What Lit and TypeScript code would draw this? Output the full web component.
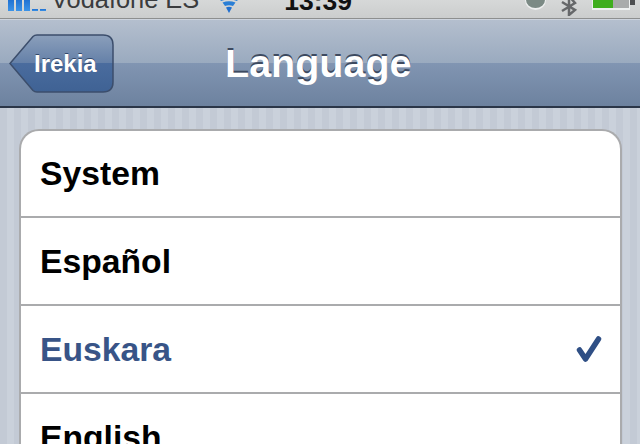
import { LitElement, css, html } from "lit";
import { customElement } from "lit/decorators.js";

const LANGUAGES = ["System", "Español", "Euskara", "English"];
const SELECTED = "Euskara";

@customElement("app-root")
export class AppRoot extends LitElement {
  static override styles = css`
    :host {
      display: block;
      width: 640px;
      height: 444px;
      overflow: hidden;
      font-family: "Liberation Sans", Arial, sans-serif;
      background: repeating-linear-gradient(
        90deg,
        #c3cad5 0,
        #c3cad5 7px,
        #cad1db 7px,
        #cad1db 14px
      );
    }

    .status {
      display: flex;
      align-items: flex-end;
      height: 19px;
      overflow: hidden;
      box-sizing: border-box;
      background: linear-gradient(#d6d8d8, #cbcdcd);
      border-bottom: 1px solid #8d8f8f;
    }

    .signal {
      display: flex;
      align-items: flex-end;
      gap: 2px;
      margin: 0 0 7px 8px;
    }

    .signal i {
      display: block;
      width: 6px;
      background: linear-gradient(#1f6fd0, #3b93e8);
    }

    .carrier {
      margin: 0 0 6px 5px;
      font-size: 25.400px;
      line-height: 26px;
      color: #3a3c3e;
    }

    .wifi {
      margin: 0 0 5px 18px;
    }

    .time {
      margin: 0 0 4px 43px;
      font-size: 26.500px;
      line-height: 26px;
      font-weight: 700;
      color: #111;
    }

    .tray {
      display: flex;
      align-items: flex-start;
      align-self: stretch;
      gap: 14px;
      margin: 0 5px 0 auto;
    }

    .tray svg {
      display: block;
    }

    .nav {
      display: flex;
      align-items: center;
      height: 89px;
      box-sizing: border-box;
      background: linear-gradient(
        #b4bfce 0,
        #9aaabf 50%,
        #8195b2 50%,
        #6d829f 100%
      );
      border-top: 1px solid #cdd4de;
      border-bottom: 2px solid #2b3648;
    }

    .back {
      position: relative;
      display: block;
      flex: none;
      margin-left: 9px;
      width: 105px;
      height: 59px;
    }

    .back svg {
      display: block;
    }

    .back span {
      position: absolute;
      left: 25px;
      top: 0;
      line-height: 59px;
      font-size: 24px;
      font-weight: 700;
      color: #fff;
      text-shadow: 0 -1px 0 #33486a;
    }

    .title {
      margin: 0 0 0 111px;
      font-size: 39.500px;
      line-height: 46px;
      font-weight: 700;
      color: #fff;
      text-shadow: 0 -2px 0 #3d4a60;
    }

    .content {
      padding: 21px 18px 0 19px;
    }

    .card {
      background: #fff;
      border: 2px solid #aaabad;
      border-bottom: none;
      border-radius: 20px 20px 0 0;
    }

    .row {
      display: flex;
      align-items: center;
      justify-content: space-between;
      box-sizing: border-box;
      height: 88px;
      padding: 0 18px 0 19px;
      font-size: 33.700px;
      font-weight: 700;
      color: #000;
      border-bottom: 2px solid #aaabad;
    }

    .row:first-child {
      height: 87px;
    }

    .row.selected {
      color: #385487;
    }

    .check {
      display: block;
    }
  `;

  override render() {
    return html`
      <div class="status">
        <div class="signal">
          <i style="height:12px"></i><i style="height:12px"></i><i style="height:12px"></i>
          <i style="height:2px"></i><i style="height:2px"></i>
        </div>
        <span class="carrier">Vodafone ES</span>
        <svg class="wifi" width="24" height="13" viewBox="0 0 24 13">
          <path d="M1 -3Q12 -7 23 -3L20 1Q12 -2 4 1Z" fill="#2a7fd6" />
          <path d="M5.500 2.500Q12 0 18.500 2.500L16 6Q12 4.500 8 6Z" fill="#2a7fd6" />
          <path d="M9 7.500Q12 6 15 7.500L12 13Z" fill="#1f6fd0" />
        </svg>
        <span class="time">13:39</span>
        <div class="tray">
          <svg width="21" height="10" viewBox="0 0 21 10">
            <path d="M0 0H21A10.500 10 0 0 1 0 0Z" fill="#eef0f0" />
            <path d="M1 0H20A9.500 8 0 0 1 1 0Z" fill="#7b8a85" />
          </svg>
          <svg width="18" height="16" viewBox="0 0 18 16">
            <path
              d="M2 2 15 10 9 15V-4L15 3 2 11"
              fill="none"
              stroke="#66686a"
              stroke-width="2.500"
            />
          </svg>
          <svg width="43" height="10" viewBox="0 0 43 10">
            <rect width="38" height="10" fill="#eef0f0" />
            <rect x="1" width="36" height="8" fill="#a9abab" />
            <rect x="1" width="20" height="8" fill="#3fae1e" />
            <rect x="38" width="5" height="5" fill="#4c4e50" />
          </svg>
        </div>
      </div>
      <div class="nav">
        <a class="back">
          <svg width="105" height="59" viewBox="0 0 105 59">
            <defs>
              <linearGradient id="backFill" x1="0" y1="0" x2="0" y2="1">
                <stop offset="0" stop-color="#8b9fbb" />
                <stop offset="0.5" stop-color="#6480a8" />
                <stop offset="0.5" stop-color="#4a6c9e" />
                <stop offset="1" stop-color="#3f6294" />
              </linearGradient>
            </defs>
            <path
              d="M1 29.500 24 2.500Q25.500 1 28 1H94Q104 1 104 11V48Q104 58 94 58H28Q25.500 58 24 56.500Z"
              fill="url(#backFill)"
              stroke="#3c4e6c"
              stroke-width="1.500"
            />
          </svg>
          <span>Irekia</span>
        </a>
        <div class="title">Language</div>
      </div>
      <div class="content">
        <div class="card">
          ${LANGUAGES.map(
            (name) => html`
              <div class="row ${name === SELECTED ? "selected" : ""}">
                <span>${name}</span>
                ${name === SELECTED
                  ? html`<svg class="check" width="26" height="28" viewBox="0 0 26 28">
                      <path
                        d="M3.500 15 9.500 24 22.500 4"
                        fill="none"
                        stroke="#2f4f85"
                        stroke-width="5.500"
                        stroke-linecap="round"
                        stroke-linejoin="round"
                      />
                    </svg>`
                  : ""}
              </div>
            `
          )}
        </div>
      </div>
    `;
  }
}

declare global {
  interface HTMLElementTagNameMap {
    "app-root": AppRoot;
  }
}
